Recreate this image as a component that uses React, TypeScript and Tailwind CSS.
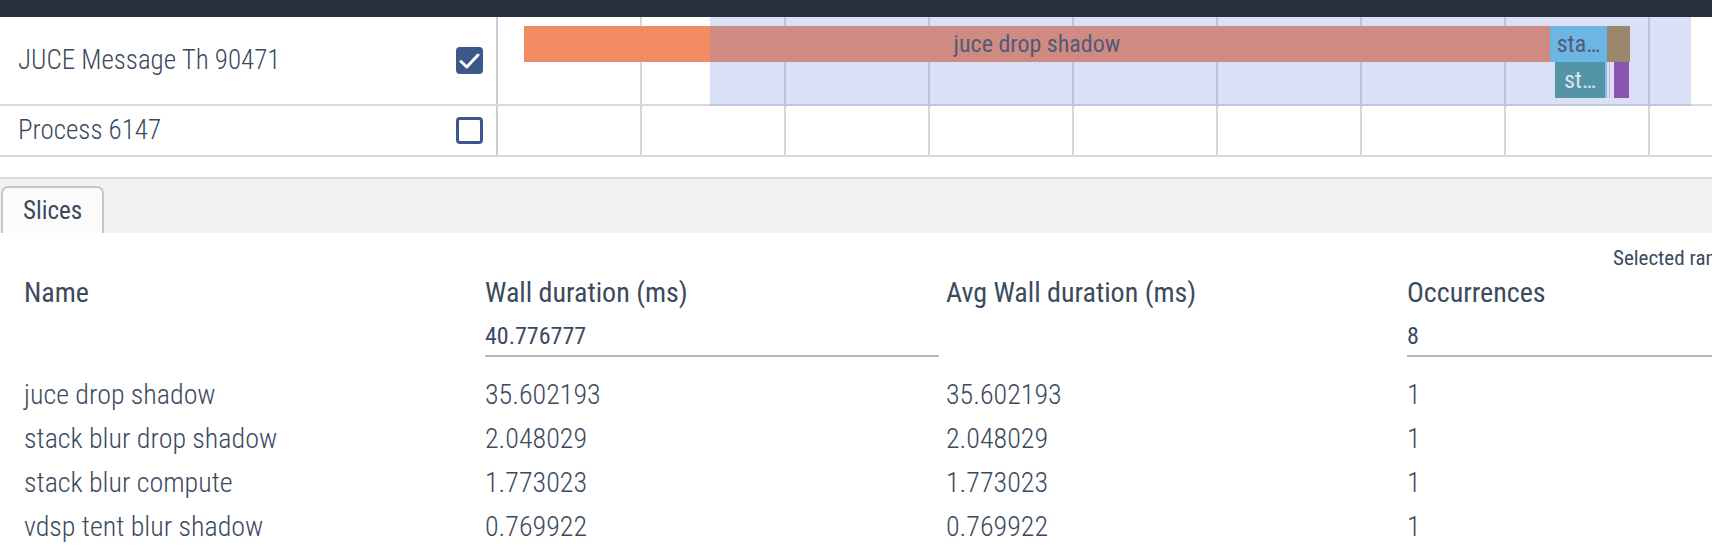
import React from 'react';

const ROWS = [
  { name: 'juce drop shadow', wall: '35.602193', avg: '35.602193', occ: '1' },
  { name: 'stack blur drop shadow', wall: '2.048029', avg: '2.048029', occ: '1' },
  { name: 'stack blur compute', wall: '1.773023', avg: '1.773023', occ: '1' },
  { name: 'vdsp tent blur shadow', wall: '0.769922', avg: '0.769922', occ: '1' },
];

const Checkbox: React.FC<{ checked?: boolean }> = ({ checked }) =>
  checked ? (
    <div className="w-[27px] h-[27px] rounded-[4px] bg-[#3d5788] flex items-center justify-center">
      <svg width="27" height="27" viewBox="0 0 27 27">
        <path d="M5 14.5 L10.8 20 L22 8" fill="none" stroke="white" strokeWidth="3" strokeLinecap="round" strokeLinejoin="round" />
      </svg>
    </div>
  ) : (
    <div className="w-[27px] h-[27px] rounded-[4px] border-[3px] border-[#3d5788] bg-white" />
  );

// background grid of the timeline
const Grid = () => (
  <div className="flex h-full">
    {Array.from({ length: 9 }).map((_, i) => (
      <div key={i} className="w-[144px] h-full shrink-0 border-r-2 border-[#d6d6d6]" />
    ))}
  </div>
);

const TrackShell: React.FC<{ name: string; checked?: boolean }> = ({ name, checked }) => (
  <div className="w-[498px] shrink-0 flex items-center justify-between pl-[18px] pr-[13px] border-r-2 border-[#c7cfdb]">
    <span className="text-[27px] leading-none font-light text-[#3b4a5d]">{name}</span>
    <Checkbox checked={checked} />
  </div>
);

export default function App() {
  return (
    <div className="w-[1712px] h-[554px] overflow-hidden bg-white font-[family-name:'Roboto_Condensed',Roboto,sans-serif] font-stretch-condensed text-[#3b4a5d]">
      {/* top bar */}
      <div className="h-[17px] bg-[#282f3d]" />

      {/* tracks */}
      <div className="flex h-[89px] border-b-2 border-[#dadada]">
        <TrackShell name="JUCE Message Th 90471" checked />
        <div className="relative flex-1 min-w-0">
          <div className="h-full overflow-hidden">
            <Grid />
          </div>
          <div className="absolute left-[26px] top-[9px] w-[1026px] h-[36px] bg-[#f08b62] flex items-center justify-center text-[24px] text-[#474850]">
            juce drop shadow
          </div>
          <div className="absolute left-[1052px] top-[9px] w-[57px] h-[36px] bg-[#68c6ea] flex items-center justify-center text-[24px] text-[#474850]">
            sta…
          </div>
          <div className="absolute left-[1109px] top-[9px] w-[23px] h-[36px] bg-[#a88647]" />
          <div className="absolute left-[1057px] top-[45px] w-[50px] h-[36px] bg-[#479793] flex items-center justify-center text-[24px] text-white">
            st…
          </div>
          <div className="absolute left-[1107px] top-[45px] w-[2px] h-[36px] bg-[#8ed2f0]" />
          <div className="absolute left-[1111px] top-[45px] w-px h-[36px] bg-[#e8b5d8]" />
          <div className="absolute left-[1116px] top-[45px] w-[15px] h-[36px] bg-[#9640a6]" />
          {/* selection overlay */}
          <div className="absolute left-[212px] right-[21px] top-0 h-[89px] bg-[rgba(120,139,217,0.27)]" />
        </div>
      </div>
      <div className="flex h-[51px] border-b-2 border-[#dadada]">
        <TrackShell name="Process 6147" />
        <div className="flex-1 min-w-0 overflow-hidden">
          <Grid />
        </div>
      </div>

      <div className="h-[20px]" />

      {/* details panel */}
      <div className="h-[56px] border-t-2 border-[#d9d9d9] bg-[#f1f1f1] flex items-end pl-px">
        <div className="w-[103px] h-[47px] rounded-t-[7px] border-2 border-b-0 border-[#c6c6c6] bg-[#fbfbfb] flex items-center justify-center text-[25px] text-[#3b4a5d]">
          Slices
        </div>
      </div>

      <div className="pt-[15px] pl-[1613px] whitespace-nowrap text-[21px] leading-[20px] text-[#3b4a5d]">
        Selected range: 43.456781 ms
      </div>

      <div className="mt-[10px] pl-[24px] grid grid-cols-[461px_461px_461px_461px] w-max">
        <div className="text-[28px] leading-[30px]">Name</div>
        <div className="text-[28px] leading-[30px]">Wall duration (ms)</div>
        <div className="text-[28px] leading-[30px]">Avg Wall duration (ms)</div>
        <div className="text-[28px] leading-[30px]">Occurrences</div>

        <div />
        <div className="mr-[7px] pt-[13px] pb-[4px] border-b-2 border-[#b3b7bd] text-[24px] leading-[30px]">40.776777</div>
        <div />
        <div className="mr-[7px] pt-[13px] pb-[4px] border-b-2 border-[#b3b7bd] text-[24px] leading-[30px]">8</div>
      </div>

      <div className="mt-[16px] pl-[24px] grid grid-cols-[461px_461px_461px_461px] w-max font-light text-[28px] leading-[44px]">
        {ROWS.map((r) => (
          <React.Fragment key={r.name}>
            <div>{r.name}</div>
            <div>{r.wall}</div>
            <div>{r.avg}</div>
            <div>{r.occ}</div>
          </React.Fragment>
        ))}
      </div>
    </div>
  );
}
